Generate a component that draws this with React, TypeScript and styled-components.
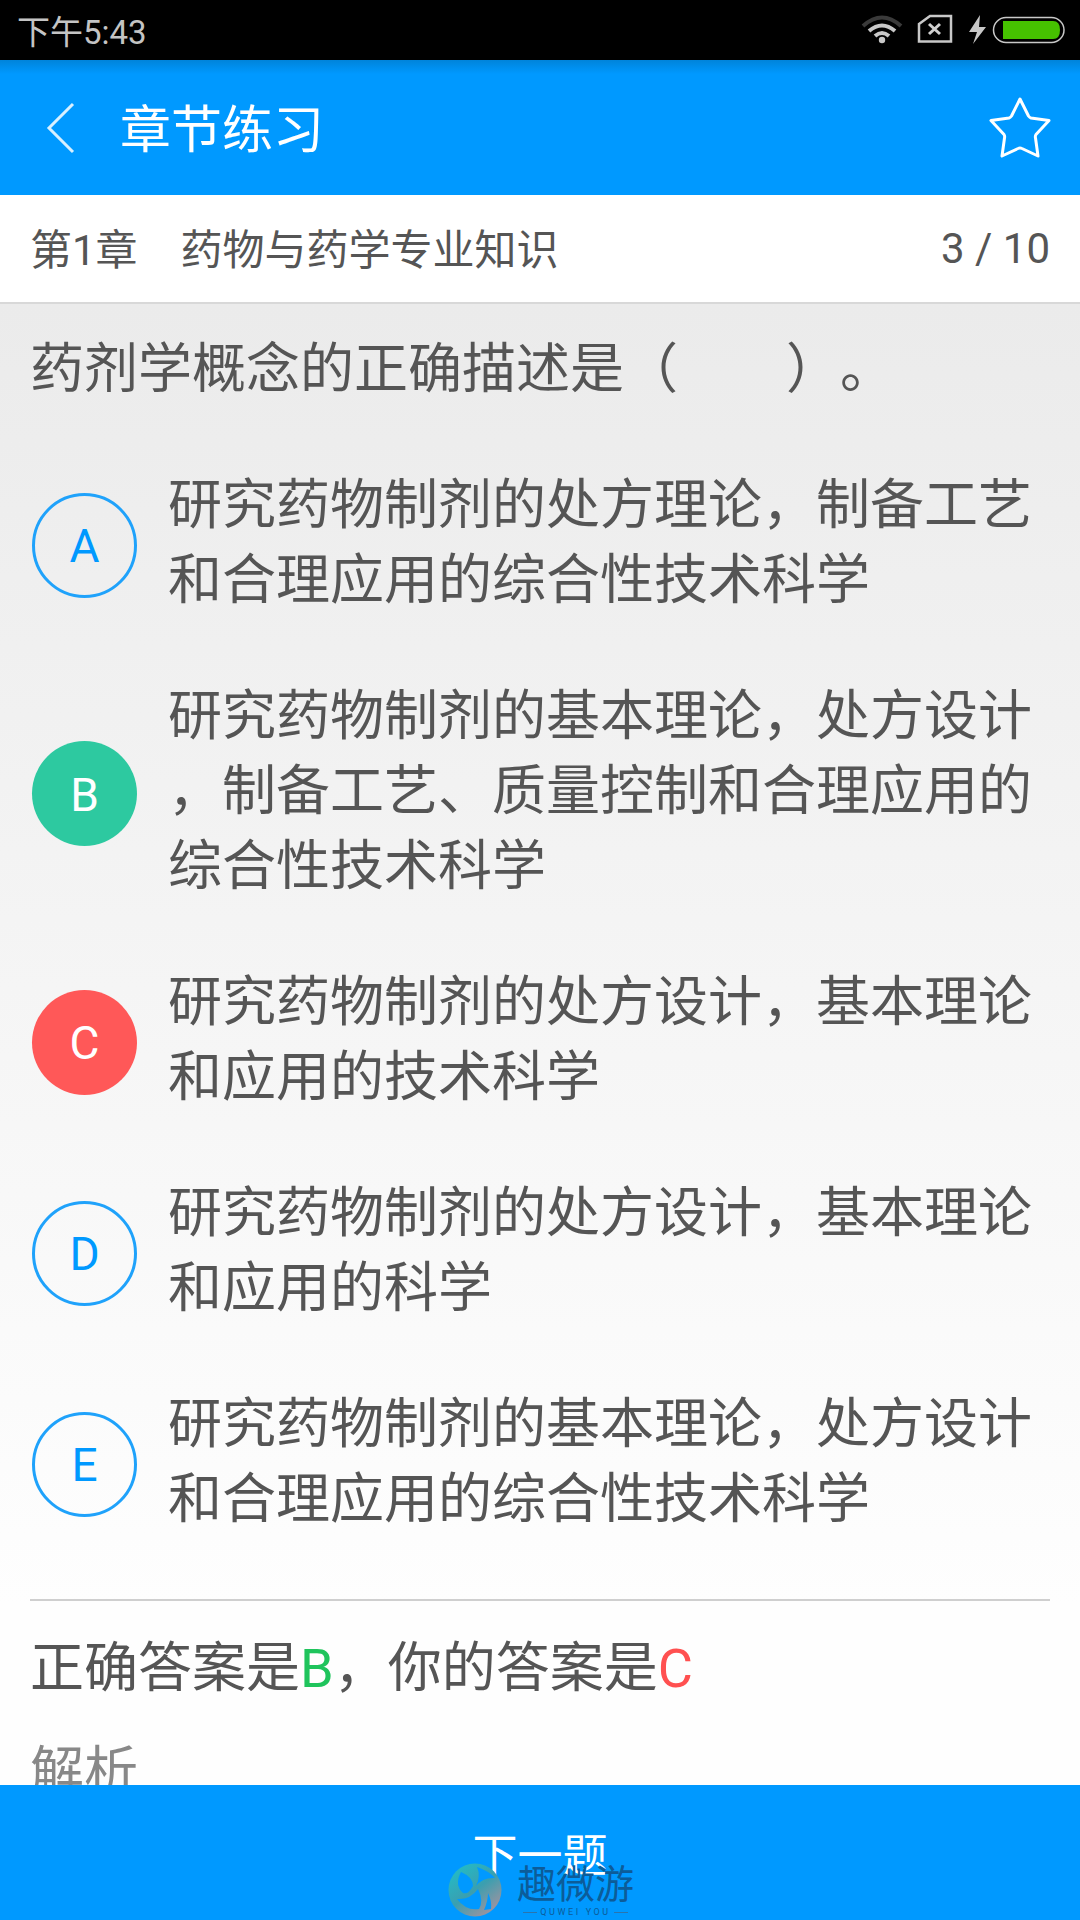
import React from "react";
import styled, { createGlobalStyle } from "styled-components";

const Global = createGlobalStyle`
  html, body {
    margin: 0;
    padding: 0;
    background: #fff;
  }
  * {
    box-sizing: border-box;
  }
`;

const Screen = styled.div`
  position: relative;
  display: flex;
  flex-direction: column;
  width: 1080px;
  height: 1920px;
  overflow: hidden;
  font-family: Roboto, "Noto Sans CJK SC", sans-serif;
  color: #555;
  text-spacing-trim: space-all;
`;

const StatusBar = styled.div`
  display: flex;
  align-items: center;
  justify-content: space-between;
  flex: none;
  height: 60px;
  padding: 0 15px 0 17px;
  background: #000;
  color: #c4c4c4;
  font-size: 33px;
`;

const Header = styled.div`
  display: flex;
  align-items: center;
  flex: none;
  height: 135px;
  padding: 0 29px 0 46px;
  background: linear-gradient(#0084da 0, #0099ff 14px);
  color: #fff;
`;

const Title = styled.div`
  flex: 1;
  margin-left: 44px;
  margin-bottom: 4px;
  font-size: 51px;
`;

const ChapterBar = styled.div`
  display: flex;
  align-items: center;
  justify-content: space-between;
  flex: none;
  height: 109px;
  padding: 0 30px 4px 30px;
  background: #fff;
  border-bottom: 2px solid #d8d8d8;
  font-size: 42px;
`;

const ChapterName = styled.span`
  margin-left: 43px;
`;

const Progress = styled.div`
  margin-top: 4px;
`;

const Body = styled.div`
  flex: 1;
  min-height: 0;
  overflow: hidden;
  background: linear-gradient(#ebebeb, #fefefe 1300px);
`;

const Question = styled.div`
  height: 136px;
  padding: 28px 30px 0 30px;
  font-size: 54px;
  line-height: 75px;
`;

const OptionRow = styled.div`
  display: flex;
  align-items: center;
  padding: 28px 30px 33px 32px;
`;

const Badge = styled.div<{ $fill?: string }>`
  display: flex;
  align-items: center;
  justify-content: center;
  flex: none;
  width: 105px;
  height: 105px;
  margin-top: 4px;
  border-radius: 50%;
  border: ${(p) => (p.$fill ? "none" : "3px solid #1fa2fb")};
  background: ${(p) => p.$fill || "transparent"};
  color: ${(p) => (p.$fill ? "#fff" : "#0099ff")};
  font-size: 46px;
  padding-top: 2px;
`;

const OptionText = styled.div`
  margin-left: 31px;
  font-size: 54px;
  line-height: 75px;
`;

const Divider = styled.div`
  height: 2px;
  margin: 29px 30px 0;
  background: #cfcfcf;
`;

const Answer = styled.div`
  padding: 30px 30px 0;
  font-size: 54px;
  line-height: 75px;
`;

const Mark = styled.span<{ $color: string }>`
  color: ${(p) => p.$color};
`;

const Analysis = styled.div`
  padding: 29px 30px 0;
  font-size: 54px;
  line-height: 75px;
  color: #888;
`;

const NextButton = styled.div`
  display: flex;
  justify-content: center;
  flex: none;
  height: 135px;
  padding-top: 42px;
  background: #0099ff;
  color: #fff;
  font-size: 45px;
  line-height: 60px;
`;

const Watermark = styled.div`
  position: absolute;
  left: 448px;
  top: 1863px;
  display: flex;
  align-items: flex-start;
`;

const MarkText = styled.div`
  display: flex;
  flex-direction: column;
  align-items: center;
  margin: 1px 0 0 15px;
  color: #0c5c99;
`;

const MarkName = styled.div`
  font-size: 39px;
  line-height: 42px;
  white-space: nowrap;
`;

const MarkSub = styled.div`
  display: flex;
  align-items: center;
  gap: 3px;
  margin-top: 1px;
  font-size: 9px;
  line-height: 10px;
  letter-spacing: 2.6px;
  white-space: nowrap;

  &::before,
  &::after {
    content: "";
    width: 14px;
    height: 1px;
    background: #2b74ad;
  }
`;

const options = [
  { key: "A", text: ["研究药物制剂的处方理论，制备工艺", "和合理应用的综合性技术科学"] },
  { key: "B", fill: "#2dc9a0", text: ["研究药物制剂的基本理论，处方设计", "，制备工艺、质量控制和合理应用的", "综合性技术科学"] },
  { key: "C", fill: "#ff5858", text: ["研究药物制剂的处方设计，基本理论", "和应用的技术科学"] },
  { key: "D", text: ["研究药物制剂的处方设计，基本理论", "和应用的科学"] },
  { key: "E", text: ["研究药物制剂的基本理论，处方设计", "和合理应用的综合性技术科学"] },
];

export default function App() {
  return (
    <Screen>
      <Global />
      <StatusBar>
        <span>下午5:43</span>
        <svg width="206" height="60" viewBox="0 0 206 60">
          <path d="M4 26 Q23 9 42 26" fill="none" stroke="#3a3a3a" strokeWidth="4" />
          <path d="M10 31 Q23 20 36 31" fill="none" stroke="#c8c8c8" strokeWidth="4" />
          <path d="M16 36 Q23 30 30 36" fill="none" stroke="#c8c8c8" strokeWidth="4" />
          <circle cx="23" cy="40" r="3.200" fill="#c8c8c8" />
          <path d="M60 24 L71 16 H92 V41.500 H60 Z" fill="none" stroke="#c8c8c8" strokeWidth="2.500" />
          <path d="M70 24 L81 34 M81 24 L70 34" stroke="#d0d0d0" strokeWidth="3" />
          <path d="M121 15 L110 32 H118 L114 44 L127 27 H120 Z" fill="#c8c8c8" />
          <rect x="134.500" y="17.500" width="70.500" height="25" rx="12.500" fill="none" stroke="#c8c8c8" strokeWidth="1.500" />
          <path d="M144 21 H194 Q201 21 201 30 Q201 39 194 39 H144 Z" fill="#46c100" />
        </svg>
      </StatusBar>
      <Header>
        <svg width="30" height="52" viewBox="0 0 30 52">
          <path d="M27 2 L3 26 L27 50" fill="none" stroke="#d8f0ff" strokeWidth="3" />
        </svg>
        <Title>章节练习</Title>
        <svg width="62" height="62" viewBox="0 0 62 62">
          <path
            d="M31 2 L39.500 19 Q40.500 20.500 42 21 L60 23.500 L47 37.500 Q46 39 46.500 41 L49 59 L33 51.500 Q31 50.500 29 51.500 L13 59 L15.500 41 Q16 39 15 37.500 L2 23.500 L20 21 Q21.500 20.500 22.500 19 Z"
            fill="none"
            stroke="#fff"
            strokeWidth="3"
            strokeLinejoin="round"
          />
        </svg>
      </Header>
      <ChapterBar>
        <div>
          第1章
          <ChapterName>药物与药学专业知识</ChapterName>
        </div>
        <Progress>3 / 10</Progress>
      </ChapterBar>
      <Body>
        <Question>药剂学概念的正确描述是（　　）。</Question>
        {options.map((o) => (
          <OptionRow key={o.key}>
            <Badge $fill={o.fill}>{o.key}</Badge>
            <OptionText>
              {o.text.map((line) => (
                <div key={line}>{line}</div>
              ))}
            </OptionText>
          </OptionRow>
        ))}
        <Divider />
        <Answer>
          正确答案是<Mark $color="#1fc45c">B</Mark>，你的答案是<Mark $color="#ff5050">C</Mark>
        </Answer>
        <Analysis>解析</Analysis>
      </Body>
      <NextButton>下一题</NextButton>
      <Watermark>
        <svg width="54" height="54" viewBox="0 0 54 54">
          <defs>
            <linearGradient id="logoFill" x1="0.2" y1="0.1" x2="0.8" y2="0.9">
              <stop offset="0" stopColor="#25b8c4" />
              <stop offset="0.5" stopColor="#3a9fb0" />
              <stop offset="1" stopColor="#9a93a0" />
            </linearGradient>
          </defs>
          <circle cx="27" cy="27" r="26.500" fill="url(#logoFill)" />
          <path d="M13 9 Q25 14 25 23 Q20 32 15 30 Q6 22 13 9 Z" fill="#0099ff" />
          <path d="M29 4 Q41 8 47 15 Q35 14 28 23 Q33 13 29 4 Z" fill="#0099ff" />
          <path d="M9 36 Q22 37 30 26 Q36 38 31 46 Q18 48 9 36 Z" fill="#0099ff" />
          <path d="M40 30 Q44 38 43 46 L36 47 Q40 38 40 30 Z" fill="#0099ff" />
        </svg>
        <MarkText>
          <MarkName>趣微游</MarkName>
          <MarkSub>QUWEI YOU</MarkSub>
        </MarkText>
      </Watermark>
    </Screen>
  );
}
